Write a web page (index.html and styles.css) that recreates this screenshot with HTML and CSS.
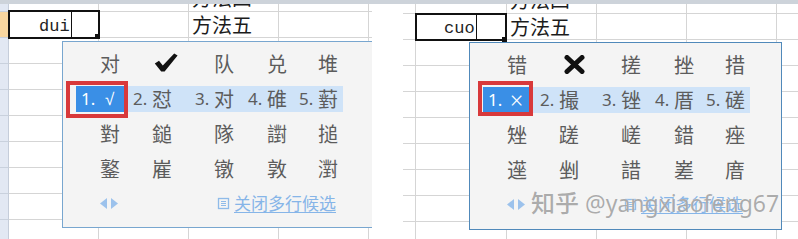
FILE: index.html
```html
<!DOCTYPE html>
<html lang="zh-CN">
<head>
<meta charset="utf-8">
<title>输入法候选</title>
<link rel="stylesheet" href="styles.css">
</head>
<body>
<div class="topbar"></div>
<div class="shots">
  <section class="shot shot--left">
    <div class="sheet sheet--left">
      <div class="cell hdr"></div><div class="cell"></div><div class="cell"></div><div class="cell txt txt--top">方法四</div><div class="cell"></div><div class="cell last"></div>
      <div class="cell hdr hdr--active"></div><div class="cell active active--left"><span class="typed">dui</span><span class="caret"></span></div><div class="cell"></div><div class="cell txt">方法五</div><div class="cell"></div><div class="cell last"></div>
      <div class="cell hdr"></div><div class="cell"></div><div class="cell"></div><div class="cell"></div><div class="cell"></div><div class="cell last"></div>
      <div class="cell hdr"></div><div class="cell"></div><div class="cell"></div><div class="cell"></div><div class="cell"></div><div class="cell last"></div>
      <div class="cell hdr"></div><div class="cell"></div><div class="cell"></div><div class="cell"></div><div class="cell"></div><div class="cell last"></div>
      <div class="cell hdr"></div><div class="cell"></div><div class="cell"></div><div class="cell"></div><div class="cell"></div><div class="cell last"></div>
      <div class="cell hdr"></div><div class="cell"></div><div class="cell"></div><div class="cell"></div><div class="cell"></div><div class="cell last"></div>
      <div class="cell hdr"></div><div class="cell"></div><div class="cell"></div><div class="cell"></div><div class="cell"></div><div class="cell last"></div>
      <div class="cell hdr"></div><div class="cell"></div><div class="cell"></div><div class="cell"></div><div class="cell"></div><div class="cell last"></div>
      <div class="cell hdr"></div><div class="cell"></div><div class="cell"></div><div class="cell"></div><div class="cell"></div><div class="cell last"></div>
    </div>

    <div class="ime ime--left">
      <div class="ime-row">
        <div class="cand"><span class="num"></span><span class="ch">对</span></div>
        <div class="cand"><span class="num"></span><svg class="sym sym--check" width="24" height="19" viewBox="0 0 24 19"><path d="M0.8 10.6 L5 7.8 L8.8 12.6 L20.2 0.6 L23.6 2.4 L10.6 18.4 L7.2 18.4 Z" fill="#111"/></svg></div>
        <div class="cand"><span class="num"></span><span class="ch">队</span></div>
        <div class="cand"><span class="num"></span><span class="ch">兑</span></div>
        <div class="cand"><span class="num"></span><span class="ch">堆</span></div>
      </div>
      <div class="ime-row ime-row--bar">
        <div class="bar">
          <div class="cand"><div class="sel"><span class="num">1.</span><span class="ch ch--sym">√</span><span class="mark mark--left"></span></div></div>
          <div class="cand"><span class="num">2.</span><span class="ch">怼</span></div>
          <div class="cand"><span class="num">3.</span><span class="ch">对</span></div>
          <div class="cand"><span class="num">4.</span><span class="ch">碓</span></div>
          <div class="cand"><span class="num">5.</span><span class="ch">薱</span></div>
        </div>
      </div>
      <div class="ime-row">
        <div class="cand"><span class="num"></span><span class="ch">對</span></div>
        <div class="cand"><span class="num"></span><span class="ch">鎚</span></div>
        <div class="cand"><span class="num"></span><span class="ch">隊</span></div>
        <div class="cand"><span class="num"></span><span class="ch">譵</span></div>
        <div class="cand"><span class="num"></span><span class="ch">搥</span></div>
      </div>
      <div class="ime-row ime-row--tall">
        <div class="cand"><span class="num"></span><span class="ch">鐜</span></div>
        <div class="cand"><span class="num"></span><span class="ch">嵟</span></div>
        <div class="cand"><span class="num"></span><span class="ch">镦</span></div>
        <div class="cand"><span class="num"></span><span class="ch">敦</span></div>
        <div class="cand"><span class="num"></span><span class="ch">濧</span></div>
      </div>
      <div class="ime-foot">
        <svg class="pager" width="18" height="11" viewBox="0 0 18 11"><path d="M7 0 L7 11 L0 5.5 Z" fill="#9cc2ec"/><path d="M11 0 L18 5.5 L11 11 Z" fill="#9cc2ec"/></svg>
        <span class="link"><svg class="link-icon" width="13" height="13" viewBox="0 0 13 13"><rect x="1.5" y="1.5" width="10" height="10" fill="none" stroke="#8fbbe9" stroke-width="1.3"/><path d="M4 4.5 H9 M4 6.5 H9 M4 8.5 H9" stroke="#8fbbe9" stroke-width="1"/></svg><span class="link-text">关闭多行候选</span></span>
      </div>
    </div>
  </section>

  <section class="shot shot--right">
    <div class="sheet sheet--right">
      <div class="cell hdr hdr--plain"></div><div class="cell"></div><div class="cell txt txt--top">方法四</div><div class="cell"></div><div class="cell"></div><div class="cell last"></div>
      <div class="cell hdr hdr--plain"></div><div class="cell active active--right"><span class="typed">cuo</span><span class="caret"></span></div><div class="cell txt">方法五</div><div class="cell"></div><div class="cell"></div><div class="cell last"></div>
      <div class="cell hdr hdr--plain"></div><div class="cell"></div><div class="cell"></div><div class="cell"></div><div class="cell"></div><div class="cell last"></div>
      <div class="cell hdr hdr--plain"></div><div class="cell"></div><div class="cell"></div><div class="cell"></div><div class="cell"></div><div class="cell last"></div>
      <div class="cell hdr hdr--plain"></div><div class="cell"></div><div class="cell"></div><div class="cell"></div><div class="cell"></div><div class="cell last"></div>
      <div class="cell hdr hdr--plain"></div><div class="cell"></div><div class="cell"></div><div class="cell"></div><div class="cell"></div><div class="cell last"></div>
      <div class="cell hdr hdr--plain"></div><div class="cell"></div><div class="cell"></div><div class="cell"></div><div class="cell"></div><div class="cell last"></div>
      <div class="cell hdr hdr--plain"></div><div class="cell"></div><div class="cell"></div><div class="cell"></div><div class="cell"></div><div class="cell last"></div>
      <div class="cell hdr hdr--plain"></div><div class="cell"></div><div class="cell"></div><div class="cell"></div><div class="cell"></div><div class="cell last"></div>
      <div class="cell hdr hdr--plain"></div><div class="cell"></div><div class="cell"></div><div class="cell"></div><div class="cell"></div><div class="cell last"></div>
    </div>

    <div class="ime ime--right">
      <div class="ime-row">
        <div class="cand"><span class="num"></span><span class="ch">错</span></div>
        <div class="cand"><span class="num"></span><svg class="sym sym--cross" width="21" height="19" viewBox="0 0 21 19"><path d="M3 2.5 L18 16.5 M18 2.5 L3 16.5" stroke="#111" stroke-width="5" stroke-linecap="round"/></svg></div>
        <div class="cand"><span class="num"></span><span class="ch">搓</span></div>
        <div class="cand"><span class="num"></span><span class="ch">挫</span></div>
        <div class="cand"><span class="num"></span><span class="ch">措</span></div>
      </div>
      <div class="ime-row ime-row--bar">
        <div class="bar">
          <div class="cand"><div class="sel"><span class="num">1.</span><span class="ch ch--sym ch--times">×</span><span class="mark mark--right"></span></div></div>
          <div class="cand"><span class="num">2.</span><span class="ch">撮</span></div>
          <div class="cand"><span class="num">3.</span><span class="ch">锉</span></div>
          <div class="cand"><span class="num">4.</span><span class="ch">厝</span></div>
          <div class="cand"><span class="num">5.</span><span class="ch">磋</span></div>
        </div>
      </div>
      <div class="ime-row">
        <div class="cand"><span class="num"></span><span class="ch">矬</span></div>
        <div class="cand"><span class="num"></span><span class="ch">蹉</span></div>
        <div class="cand"><span class="num"></span><span class="ch">嵯</span></div>
        <div class="cand"><span class="num"></span><span class="ch">錯</span></div>
        <div class="cand"><span class="num"></span><span class="ch">痤</span></div>
      </div>
      <div class="ime-row ime-row--tall">
        <div class="cand"><span class="num"></span><span class="ch">遳</span></div>
        <div class="cand"><span class="num"></span><span class="ch">剉</span></div>
        <div class="cand"><span class="num"></span><span class="ch">諎</span></div>
        <div class="cand"><span class="num"></span><span class="ch">嵳</span></div>
        <div class="cand"><span class="num"></span><span class="ch">庴</span></div>
      </div>
      <div class="ime-foot">
        <svg class="pager" width="18" height="11" viewBox="0 0 18 11"><path d="M7 0 L7 11 L0 5.5 Z" fill="#9cc2ec"/><path d="M11 0 L18 5.5 L11 11 Z" fill="#9cc2ec"/></svg>
        <span class="link"><svg class="link-icon" width="13" height="13" viewBox="0 0 13 13"><rect x="1.5" y="1.5" width="10" height="10" fill="none" stroke="#8fbbe9" stroke-width="1.3"/><path d="M4 4.5 H9 M4 6.5 H9 M4 8.5 H9" stroke="#8fbbe9" stroke-width="1"/></svg><span class="link-text">关闭多行候选</span></span>
      </div>
    </div>

    <div class="watermark"><span class="wm-logo">知乎</span> @yangxiaofeng67</div>
  </section>
</div>
</body>
</html>
```

FILE: styles.css
```css
html, body {
  margin: 0;
  padding: 0;
}

body {
  width: 798px;
  height: 239px;
  overflow: hidden;
  background: #ffffff;
  font-family: "Noto Sans CJK SC", "Noto Sans", sans-serif;
  color: #222;
}

.topbar {
  position: relative;
  z-index: 10;
  height: 4px;
  background: #cdd3da;
}

.shots {
  display: flex;
  gap: 31px;
  height: 235px;
}

.shot {
  position: relative;
  overflow: hidden;
  height: 235px;
}

.shot--left { width: 372px; }
.shot--right { width: 395px; }

/* spreadsheet grid */
.sheet {
  display: grid;
  grid-auto-rows: 26px;
}

.sheet--left {
  grid-template-columns: 9px 90px 90px 90px 90px 1fr;
  margin-top: -18px;
}

.sheet--right {
  grid-template-columns: 13px 91px 90px 90px 90px 1fr;
  margin-top: -16px;
}

.cell {
  box-sizing: border-box;
  border-right: 1px solid #d5d5d5;
  border-bottom: 1px solid #d5d5d5;
  position: relative;
  white-space: nowrap;
  line-height: 25px;
  font-size: 20px;
}

.cell.last { border-right: none; }

.hdr {
  background: #e2e8f3;
  border-right-color: #c5cdda;
  border-bottom-color: #c9d1dd;
}

.hdr--active {
  background: #f8d6a0;
}

.hdr--plain {
  background: #ffffff;
  border-right-color: #d5d5d5;
  border-bottom-color: #d5d5d5;
}

.txt {
  padding-left: 3px;
  color: #1c1c1c;
}

.txt--top {
  line-height: 24px;
  overflow: hidden;
}

.active {
  display: flex;
  align-items: flex-end;
}

.active--left { padding-left: 30px; }
.active--right { padding-left: 28px; }

.typed {
  font-family: "Liberation Mono", monospace;
  font-size: 17px;
  line-height: 21px;
  color: #222;
}

.caret {
  align-self: stretch;
  width: 1px;
  background: #111;
  margin-left: 1px;
}

.active::after {
  content: "";
  position: absolute;
  left: -1px;
  top: -2px;
  width: 92px;
  height: 29px;
  box-sizing: border-box;
  border: 2px solid #111;
  z-index: 2;
}

.active--right::after {
  top: -1px;
  height: 28px;
}

.active::before {
  content: "";
  position: absolute;
  left: 86px;
  top: 22px;
  width: 5px;
  height: 5px;
  background: #111;
  z-index: 3;
}

.active--right::before {
  top: 23px;
}

/* IME candidate window (floats over the sheet) */
.ime {
  position: absolute;
  box-sizing: border-box;
  background: #f4f4f4;
  border: 1px solid #78a6cf;
  padding: 4px 0 0 13px;
  z-index: 5;
}

.ime--left {
  left: 62px;
  top: 37px;
  width: 330px;
  height: 187px;
}

.ime--right {
  left: 66px;
  top: 38px;
  width: 313px;
  height: 188px;
  border-color: #5089ba;
}

.ime-row {
  display: grid;
  grid-template-columns: 52px 62px 53px 51px 49px;
  height: 35px;
  align-items: center;
}

.ime-row--tall { height: 36px; }

.ime-row--bar {
  display: flex;
  align-items: center;
}

.bar {
  display: grid;
  grid-template-columns: 52px 62px 53px 51px 49px;
  height: 26px;
  background: #cfe3f8;
}

.cand {
  display: flex;
  align-items: center;
  height: 100%;
  padding-left: 5px;
  color: #5c5c5c;
}

.bar .cand:first-child {
  padding-left: 0;
}

.sel {
  position: relative;
  display: flex;
  align-items: center;
  width: 49px;
  height: 26px;
  box-sizing: border-box;
  padding-left: 5px;
  background: #3a8fe6;
  color: #ffffff;
}

.num {
  width: 19px;
  flex: none;
  font-family: "Noto Sans", sans-serif;
  font-size: 17px;
  line-height: 20px;
}

.ch {
  font-size: 20px;
  line-height: 24px;
}

.ch--sym {
  font-family: "DejaVu Sans", sans-serif;
  font-weight: 300;
  font-size: 17px;
  margin-left: 5px;
}

.ch--times {
  font-family: "Noto Sans", sans-serif;
  font-weight: 300;
  font-size: 23px;
  margin-left: 3px;
}

.sym { display: block; }
.sym--check { margin-left: 2px; margin-top: -3px; }
.sym--cross { margin-left: 5px; margin-top: -1px; }

.mark {
  position: absolute;
  box-sizing: border-box;
  border: 4px solid #d8393b;
}

.mark--left {
  left: -10px;
  top: -5px;
  width: 62px;
  height: 37px;
}

.mark--right {
  left: -5px;
  top: -6px;
  width: 55px;
  height: 35px;
}

.ime-foot {
  display: flex;
  align-items: center;
  height: 32px;
  padding-left: 24px;
}

.pager {
  display: block;
  flex: none;
}

.link {
  display: flex;
  align-items: center;
  margin-left: 99px;
  color: #86b5e8;
  font-size: 17px;
  line-height: 20px;
}

.link-icon {
  display: block;
  margin-right: 4px;
}

.link-text {
  text-decoration: underline;
  text-underline-offset: 2px;
}

/* site watermark over the right picture */
.watermark {
  position: absolute;
  left: 128px;
  top: 184px;
  z-index: 8;
  font-family: "Noto Sans", "Noto Sans CJK SC", sans-serif;
  font-size: 23px;
  line-height: 28px;
  white-space: nowrap;
  color: rgba(140, 140, 140, 0.72);
  text-shadow: 0 0 1px rgba(255, 255, 255, 0.9);
}

.wm-logo {
  font-family: "Noto Sans CJK SC", sans-serif;
  font-size: 24px;
  font-weight: 500;
}
```
